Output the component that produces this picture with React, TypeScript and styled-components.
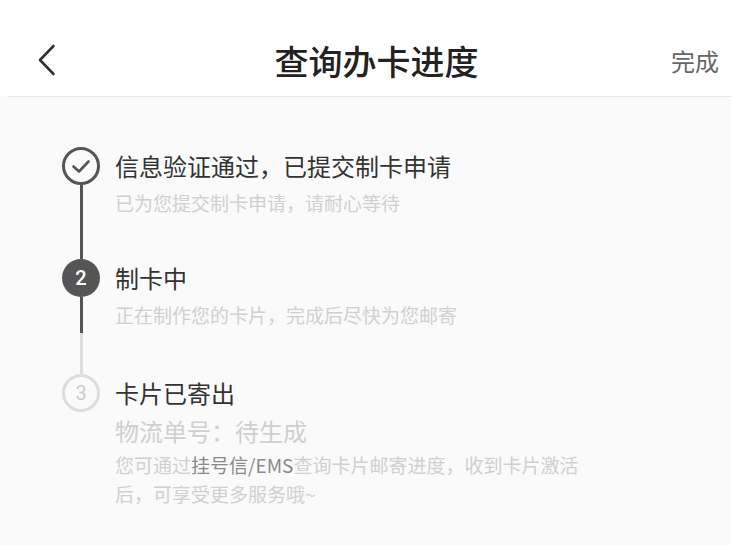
import React from "react";
import styled, { createGlobalStyle, css } from "styled-components";

const GlobalStyle = createGlobalStyle`
  html, body {
    margin: 0;
    padding: 0;
    background: #fafafa;
  }
  body {
    font-family: "Noto Sans CJK SC", "Noto Sans", Roboto, sans-serif;
    -webkit-font-smoothing: antialiased;
  }
  * { box-sizing: border-box; }
`;

const Page = styled.div`
  min-height: 100vh;
  display: flex;
  flex-direction: column;
  background: #fafafa;
`;

const Header = styled.header`
  background: #ffffff;
  padding-top: 24px;
`;

const NavBar = styled.div`
  height: 72px;
  display: grid;
  grid-template-columns: 1fr auto 1fr;
  align-items: center;
`;

const BackButton = styled.button`
  justify-self: start;
  margin-left: 36px;
  padding: 0;
  border: none;
  background: none;
  display: flex;
  align-items: center;
  cursor: pointer;
`;

const Title = styled.h1`
  margin: 0 0 0 22px;
  font-size: 34px;
  font-weight: 500;
  color: #222222;
  letter-spacing: 0;
`;

const DoneButton = styled.button`
  justify-self: end;
  margin-right: 12px;
  padding: 0;
  border: none;
  background: none;
  font-family: inherit;
  font-size: 24px;
  color: #666666;
  cursor: pointer;
`;

const Divider = styled.div`
  height: 1px;
  margin-left: 8px;
  background: #e9e9e9;
`;

const Timeline = styled.ol`
  list-style: none;
  margin: 0;
  padding: 50px 0 0 62px;
`;

const Step = styled.li`
  display: grid;
  grid-template-columns: 38px 1fr;
  column-gap: 15px;
`;

const Rail = styled.div`
  display: flex;
  flex-direction: column;
  align-items: center;
`;

type MarkerState = "done" | "active" | "pending";

const Marker = styled.div<{ $state: MarkerState }>`
  width: 38px;
  height: 38px;
  border-radius: 50%;
  display: flex;
  align-items: center;
  justify-content: center;
  font-family: Roboto, "Noto Sans", sans-serif;
  font-size: 20px;
  font-weight: 500;
  flex: none;
  ${({ $state }) =>
    $state === "done" &&
    css`
      border: 3px solid #555555;
      color: #555555;
    `}
  ${({ $state }) =>
    $state === "active" &&
    css`
      background: #555555;
      color: #ffffff;
    `}
  ${({ $state }) =>
    $state === "pending" &&
    css`
      border: 3px solid #dddddd;
      color: #cccccc;
      font-weight: 400;
    `}
`;

const Connector = styled.div<{ $progress: number }>`
  flex: 1;
  width: 3px;
  background: ${({ $progress }) =>
    `linear-gradient(to bottom, #555555 0, #555555 ${$progress}px, #dddddd ${$progress}px, #dddddd 100%)`};
`;

const Body = styled.div<{ $gap: number }>`
  padding-bottom: ${({ $gap }) => $gap}px;
`;

const StepTitle = styled.div`
  font-size: 24px;
  line-height: 38px;
  color: #333333;
`;

const StepNote = styled.div`
  font-size: 19px;
  line-height: 36px;
  color: #d0d0d0;
`;

const Tracking = styled.div`
  font-size: 24px;
  line-height: 38px;
  color: #cfcfcf;
`;

const Hint = styled.p`
  margin: 0;
  max-width: 474px;
  font-size: 19px;
  line-height: 29px;
  color: #d0d0d0;
`;

const Carrier = styled.b`
  font-weight: 400;
  color: #8a8a8a;
`;

const ChevronLeft = () => (
  <svg width="22" height="34" viewBox="0 0 22 34" fill="none">
    <path
      d="M17.5 3 L4 17 L17.5 31"
      stroke="#333333"
      strokeWidth="2.6"
      strokeLinecap="round"
      strokeLinejoin="round"
    />
  </svg>
);

const CheckMark = () => (
  <svg width="22" height="22" viewBox="0 0 22 22" fill="none">
    <path
      d="M3.5 11.5 L9 16.5 L18.5 6.5"
      stroke="#555555"
      strokeWidth="2.6"
      strokeLinecap="round"
      strokeLinejoin="round"
    />
  </svg>
);

export default function App() {
  return (
    <Page>
      <GlobalStyle />
      <Header>
        <NavBar>
          <BackButton aria-label="返回">
            <ChevronLeft />
          </BackButton>
          <Title>查询办卡进度</Title>
          <DoneButton>完成</DoneButton>
        </NavBar>
      </Header>
      <Divider />
      <Timeline>
        <Step>
          <Rail>
            <Marker $state="done">
              <CheckMark />
            </Marker>
            <Connector $progress={999} />
          </Rail>
          <Body $gap={38}>
            <StepTitle>信息验证通过，已提交制卡申请</StepTitle>
            <StepNote>已为您提交制卡申请，请耐心等待</StepNote>
          </Body>
        </Step>
        <Step>
          <Rail>
            <Marker $state="active">2</Marker>
            <Connector $progress={36} />
          </Rail>
          <Body $gap={41}>
            <StepTitle>制卡中</StepTitle>
            <StepNote>正在制作您的卡片，完成后尽快为您邮寄</StepNote>
          </Body>
        </Step>
        <Step>
          <Rail>
            <Marker $state="pending">3</Marker>
          </Rail>
          <Body $gap={30}>
            <StepTitle>卡片已寄出</StepTitle>
            <Tracking>物流单号：待生成</Tracking>
            <Hint>
              您可通过<Carrier>挂号信/EMS</Carrier>查询卡片邮寄进度，收到卡片激活后，可享受更多服务哦~
            </Hint>
          </Body>
        </Step>
      </Timeline>
    </Page>
  );
}
